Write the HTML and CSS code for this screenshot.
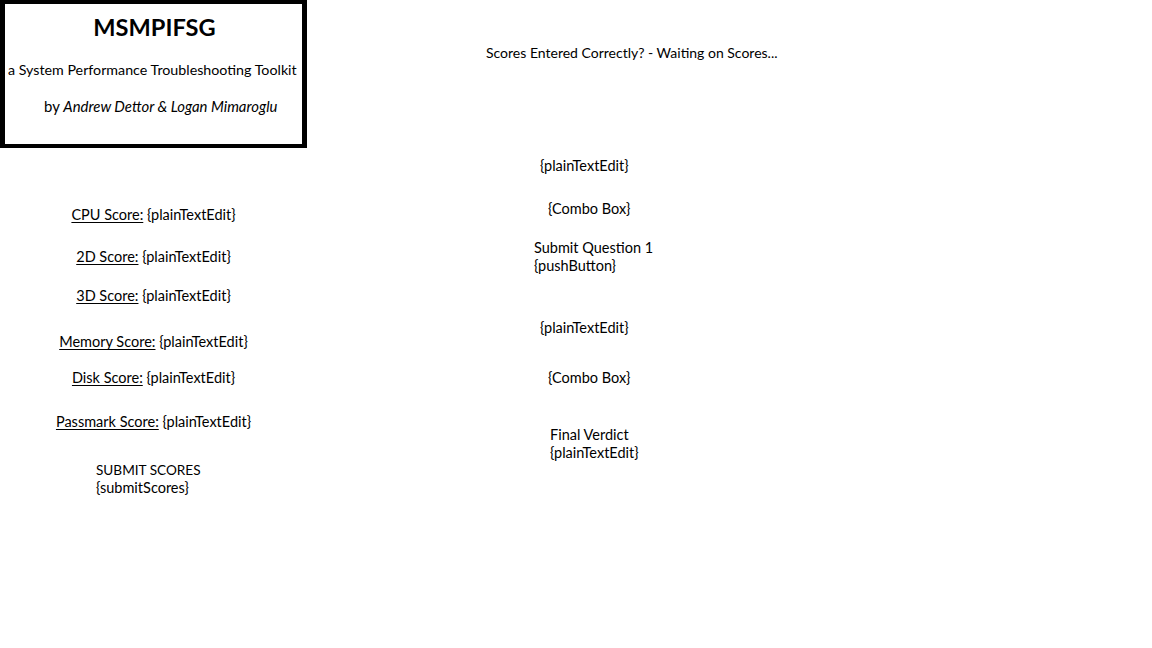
FILE: index.html
```html
<!DOCTYPE html>
<html>
<head>
<meta charset="utf-8">
<link rel="stylesheet" href="styles.css">
</head>
<body>
<div class="page">
  <div class="left">
    <div class="titlebox">
      <div class="title">MSMPIFSG</div>
      <div class="subtitle">a System Performance Troubleshooting Toolkit</div>
      <div class="byline">by <i>Andrew Dettor &amp; Logan Mimaroglu</i></div>
    </div>
    <div class="scores">
      <div class="row r-cpu"><u>CPU Score:</u> {plainTextEdit}</div>
      <div class="row r-2d"><u>2D Score:</u> {plainTextEdit}</div>
      <div class="row r-3d"><u>3D Score:</u> {plainTextEdit}</div>
      <div class="row r-mem"><u>Memory Score:</u> {plainTextEdit}</div>
      <div class="row r-disk"><u>Disk Score:</u> {plainTextEdit}</div>
      <div class="row r-pass"><u>Passmark Score:</u> {plainTextEdit}</div>
      <div class="row r-submit"><span class="caps">SUBMIT SCORES</span><br>{submitScores}</div>
    </div>
  </div>
  <div class="right">
    <div class="item i-head">Scores Entered Correctly? - Waiting on Scores...</div>
    <div class="item i-pte1">{plainTextEdit}</div>
    <div class="item i-cb1">{Combo Box}</div>
    <div class="item i-sq">Submit Question 1<br>{pushButton}</div>
    <div class="item i-pte2">{plainTextEdit}</div>
    <div class="item i-cb2">{Combo Box}</div>
    <div class="item i-fv">Final Verdict<br>{plainTextEdit}</div>
  </div>
</div>
</body>
</html>
```

FILE: styles.css
```css
html, body {
  margin: 0;
  padding: 0;
  background: #ffffff;
}
body {
  font-family: Lato, "Open Sans", sans-serif;
  font-size: 14.5px;
  line-height: 18px;
  color: #000000;
}
.page {
  display: flex;
  width: 1152px;
  height: 648px;
}
.left {
  width: 307px;
  flex: none;
}
.titlebox {
  box-sizing: border-box;
  width: 307px;
  height: 148px;
  border: 4px solid #000;
  border-left-width: 5px;
  border-right-width: 5px;
  padding-top: 9px;
}
.title {
  font-weight: 700;
  font-size: 23.6px;
  line-height: 28px;
  text-align: center;
  padding-left: 2px;
}
.subtitle {
  font-size: 14.25px;
  line-height: 18px;
  margin-top: 20px;
  margin-left: 3px;
  white-space: nowrap;
}
.byline {
  font-size: 14.9px;
  line-height: 18px;
  margin-top: 18px;
  margin-left: 39px;
  white-space: nowrap;
}
.scores {
  padding-top: 58px;
  display: flex;
  flex-direction: column;
}
.row {
  text-align: center;
  height: 18px;
  white-space: nowrap;
}
.row u {
  text-underline-offset: 2px;
}
.r-2d { margin-top: 24px; }
.r-3d { margin-top: 21px; }
.r-mem { margin-top: 28px; }
.r-disk { margin-top: 18px; }
.r-pass { margin-top: 26px; }
.r-submit {
  margin-top: 30px;
  height: 36px;
  text-align: left;
  margin-left: 96px;
}
.caps {
  font-size: 13.6px;
}
.right {
  flex: 1;
  padding-top: 45px;
  display: flex;
  flex-direction: column;
  align-items: flex-start;
}
.item {
  white-space: nowrap;
}
.i-head { margin-left: 179px; font-size: 14px; margin-top: -1px; }
.i-pte1 { margin-left: 233px; margin-top: 95px; }
.i-cb1 { margin-left: 241px; margin-top: 25px; }
.i-sq { margin-left: 227px; margin-top: 21px; }
.i-pte2 { margin-left: 233px; margin-top: 44px; }
.i-cb2 { margin-left: 241px; margin-top: 32px; }
.i-fv { margin-left: 243px; margin-top: 39px; }
```
